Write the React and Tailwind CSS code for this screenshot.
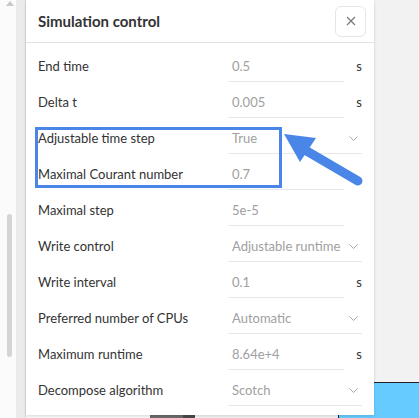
import React from 'react';

const rows = [
    { label: 'End time', value: '0.5', unit: 's' },
    { label: 'Delta t', value: '0.005', unit: 's' },
    { label: 'Adjustable time step', value: 'True', select: true },
    { label: 'Maximal Courant number', value: '0.7' },
    { label: 'Maximal step', value: '5e-5' },
    { label: 'Write control', value: 'Adjustable runtime', select: true },
    { label: 'Write interval', value: '0.1', unit: 's' },
    { label: 'Preferred number of CPUs', value: 'Automatic', select: true },
    { label: 'Maximum runtime', value: '8.64e+4', unit: 's' },
    { label: 'Decompose algorithm', value: 'Scotch', select: true },
];

const Chevron = () => (
    <svg width="9" height="5" viewBox="0 0 9 5" fill="none">
        <path d="M0.5 0.5l4 4 4-4" stroke="#a8a8a8" strokeWidth="1" />
    </svg>
);

const Row = ({ row }) => {
    if (row.select) {
        return (
            <div className='flex items-center h-9'>
                <div className='w-[190px] text-[13px] text-[#333]'>{row.label}</div>
                <div className='w-[134px] h-[30px] flex items-center justify-between pl-1 pr-[4px] border-b border-[#e8e8e8]'>
                    <span className='whitespace-nowrap text-[13px] text-[#a0a0a0]'>{row.value}</span>
                    <Chevron />
                </div>
            </div>
        );
    }
    return (
        <div className='flex items-center h-9'>
            <div className='w-[190px] text-[13px] text-[#333]'>{row.label}</div>
            <div className='w-[116px] h-[30px] flex items-center pl-1 border-b border-[#e8e8e8]'>
                <span className='text-[13px] text-[#a0a0a0]'>{row.value}</span>
            </div>
            <div className='w-[30px] text-center text-[13px] text-[#333]'>{row.unit}</div>
        </div>
    );
};

export default function App() {
    return (
        <div className='relative w-[419px] h-[418px] overflow-hidden flex bg-[#f2f2f2]' style={{ fontFamily: 'Lato, "Open Sans", sans-serif' }}>
            {/* left scroll strip */}
            <div className='w-4 h-full bg-[#fbfbfb] relative'>
                <div className='absolute left-[6px] top-[1px] w-0 h-0 border-x-[4px] border-x-transparent border-b-[5px] border-b-[#c8c8c8]'></div>
                <div className='absolute left-[7px] top-[214px] w-[5px] h-[143px] rounded-full bg-[#d5d5d5]'></div>
            </div>
            <div className='w-[10px] h-full bg-[#ebebeb] border-r border-[#dedede]'></div>

            {/* panel column */}
            <div className='w-[348px] h-full flex flex-col'>
                <div className='relative h-[415px] bg-white shadow-[0_1px_3px_rgba(0,0,0,0.15)] flex flex-col'>
                    <div className='h-[43px] flex items-center justify-between pl-3 pr-2 border-b border-[#e2e2e2]'>
                        <h1 className='text-[15px] font-bold text-[#333]'>Simulation control</h1>
                        <button className='w-[31px] h-[31px] rounded-md border border-[#e6e6e6] flex items-center justify-center'>
                            <svg width="10" height="10" viewBox="0 0 10 10">
                                <path d="M1 1l8 8M9 1l-8 8" stroke="#777" strokeWidth="1.2" />
                            </svg>
                        </button>
                    </div>
                    <div className='pt-[6px] pl-3'>
                        {rows.map((row) => (
                            <Row key={row.label} row={row} />
                        ))}
                    </div>
                    <div className='absolute left-[9px] top-[127px] w-[247px] h-[61px] border-[3px] border-[#4a86e8]'></div>
                </div>
                <div className='flex-1 flex'>
                    <div className='w-[124px] bg-[#fafafa]'></div>
                    <div className='w-[33px] bg-[#6b6b6b]'></div>
                    <div className='w-[12px] bg-[#4a4a4a]'></div>
                    <div className='flex-1 bg-[#f2f2f2]'></div>
                    <div className='w-[36px] bg-[#66ccff] border-l border-[#222]'></div>
                </div>
            </div>

            {/* right area */}
            <div className='flex-1 flex flex-col'>
                <div className='flex-1 bg-[#f2f2f2]'></div>
                <div className='h-9 bg-[#66ccff] border-t border-[#222]'></div>
            </div>

            {/* arrow */}
            <svg className='absolute left-0 top-0 pointer-events-none' width="419" height="418" viewBox="0 0 419 418">
                <line x1="358" y1="181" x2="305" y2="150" stroke="#4a86e8" strokeWidth="9" strokeLinecap="round" />
                <polygon points="284,134 316,138 300,162" fill="#4a86e8" />
            </svg>
        </div>
    );
}
